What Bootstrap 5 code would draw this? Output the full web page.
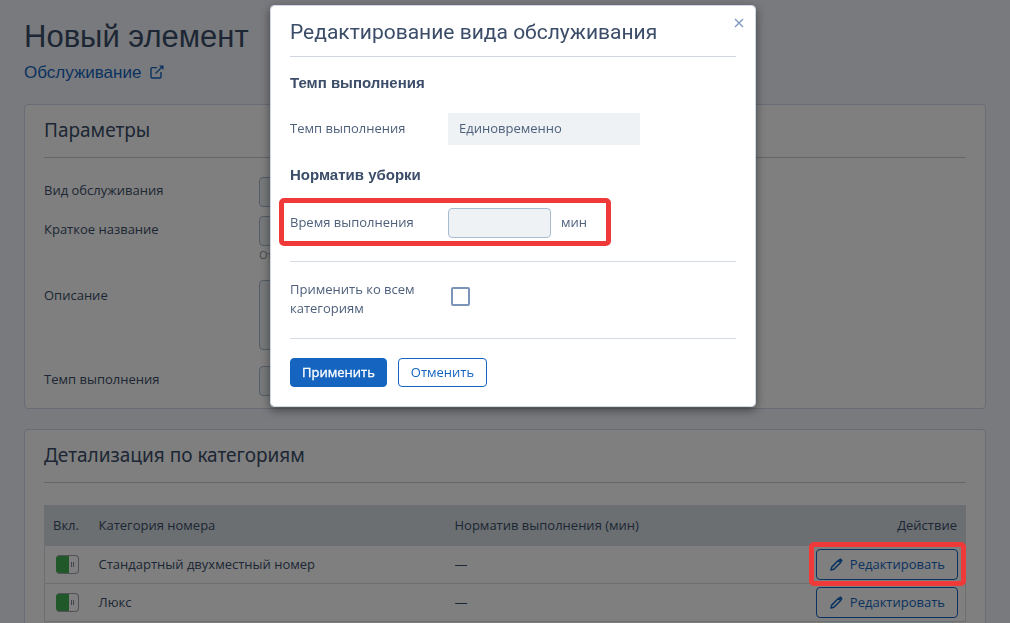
<!DOCTYPE html>
<html lang="ru">
<head>
<meta charset="utf-8">
<meta name="viewport" content="width=device-width, initial-scale=1">
<title>Новый элемент</title>
<link href="https://cdn.jsdelivr.net/npm/bootstrap@5.3.0/dist/css/bootstrap.min.css" rel="stylesheet">
<style>
  :root { --ink: #3b4d68; --brand: #1565c0; --field: #eef2f5; --mark: #f03a3a; }
  body { font-family: "Open Sans", "Noto Sans", sans-serif; font-size: 13px; line-height: 19px; color: var(--ink); background: #f2f5fa; }
  h1, h2, h3, .page-link-row { color: var(--ink); font-weight: 400; margin: 0; }
  h1, .page-link-row { font-family: "Liberation Sans", Arial, sans-serif; }
  h1 { font-size: 31px; line-height: 42px; }
  .page-link-row { font-size: 17px; line-height: 30px; }
  .page-link-row a { color: var(--brand); }
  .panel { border: 1px solid #d0d8e8; border-radius: 4px; padding: 15px 19px 12px; }
  .panel h2 { font-family: "Noto Sans", sans-serif; font-size: 19px; line-height: 20px; padding-bottom: 17px; border-bottom: 1px solid #c8ccd4; }
  .form-line { display: grid; grid-template-columns: 215px minmax(0, 480px); align-items: start; }
  .form-line > label { padding-top: 4px; }
  .form-line > .label-area { padding-top: 6px; }
  .form-control, .form-select { min-height: 30px; height: 30px; font-size: 13px; border-color: #a9bbd0; border-radius: 4px; background-color: var(--field); }
  textarea.form-control { height: 70px; }
  .hint { font-size: 11px; line-height: 18px; color: #8b95a5; }
  .grid-table { --bs-table-color: var(--ink); border: 1px solid #d9dde2; margin: 22px 0 0; }
  .grid-table > :not(caption) > * > * { padding: 0 8px; vertical-align: middle; border-color: #d9dde2; }
  .grid-table > tbody > tr > td:last-child { padding-right: 7px; }
  .grid-table th { height: 40px; font-weight: 400; background: #d6dee4; }
  .grid-table td { height: 38px; }
  .grid-table .c-on { width: 46px; }
  .grid-table .c-cat { width: 356px; }
  .toggle { appearance: none; display: block; margin: 0 0 0 3px; width: 23px; height: 19px; border: 1px solid #a9a0b0; border-left-color: #42b055; border-radius: 4px;
    background: linear-gradient(#8089a0, #8089a0) 14px 6px / 1px 5px no-repeat, linear-gradient(#8089a0, #8089a0) 16px 6px / 1px 5px no-repeat, linear-gradient(90deg, #42b055 12px, #fff 12px); }
  .btn { font-size: 13px; line-height: 19px; border-radius: 4px; padding: 4px 12px; }
  .btn-line { --bs-btn-color: var(--brand); --bs-btn-border-color: var(--brand); }
  .btn-apply { --bs-btn-color: #fff; --bs-btn-bg: var(--brand); --bs-btn-border-color: var(--brand); -webkit-text-stroke: .3px; padding: 4px 11px; }
  .modal-content .btn { height: 29px; }
  .btn-edit { height: 31px; }
  .btn-edit svg { margin-right: 6px; }
  .marked { position: relative; }
  .marked::after { content: ""; position: absolute; inset: var(--gap); border: 5px solid var(--mark); border-radius: 5px; z-index: 1060; pointer-events: none; }
  .mark-btn { --gap: -7px -8px -6px -7px; }
  .mark-row { --gap: -10px 125px -8px -11px; }
  .modal-backdrop { opacity: .5; }
  .edit-modal { --bs-modal-width: 486px; padding-left: 16px; }
  .edit-modal .modal-dialog { margin: 5px auto; }
  .edit-modal .modal-content { padding: 12px 19px 19px; border: 1px solid #d0d8e8; border-radius: 4px; box-shadow: 0 3px 10px rgba(0,0,0,.45); color: #4d5f7a; }
  .modal-title { font-family: Roboto, sans-serif; font-size: 21px; line-height: 28px; padding-bottom: 10px; border-bottom: 1px solid #d0d6e4; }
  .modal-content h3 { font-family: "Liberation Sans", Arial, sans-serif; font-size: 15px; line-height: 20px; font-weight: 700; }
  .dialog-line { display: grid; grid-template-columns: 158px 1fr; align-items: center; }
  .dialog-line > label { margin-top: -2px; }
  .plain-value { width: 192px; height: 32px; border: 0; border-radius: 0; padding: 0 11px 2px; background: var(--field); color: #4d5f7a; }
  .minutes { width: 103px; }
  .unit { padding: 0 0 2px 10px; }
  .modal-content .all-box { width: 19px; height: 19px; margin: 0 0 8px 3px; border: 2px solid #7b94b8; border-radius: 2px; }
  .rule { margin: 0; opacity: 1; border-color: #d5dbe4; }
  .close-x { position: absolute; top: 11px; right: 10px; padding: 0; border: 0; background: none; line-height: 0; color: #7f9abf; }
  .gap-s { margin-top: 9px; }
  .gap-m { margin-top: 20px; }
  .gap-f { margin-top: 19px; }
  .gap-l { margin-top: 23px; }
  .all-line { margin: 19px 0; min-height: 38px; }
</style>
</head>
<body class="overflow-hidden">
<main class="px-4 pb-4 pt-3">
  <h1>Новый элемент</h1>
  <div class="page-link-row">
    <a href="#" class="text-decoration-none">Обслуживание
      <svg class="ms-1 mb-1" width="14" height="14" viewBox="0 0 14 14" fill="none" stroke="currentColor" stroke-width="1.4" aria-hidden="true"><path d="M7 2.600H2.200a1.200 1.200 0 0 0-1.200 1.200v8A1.200 1.200 0 0 0 2.200 13h7.600a1.200 1.200 0 0 0 1.200-1.200V7M5.500 8.500L12.500 1.500"/><path d="M9 .5h4.500V5z" fill="currentColor" stroke="none"/></svg>
    </a>
  </div>

  <section class="panel bg-white mt-3">
    <h2>Параметры</h2>
    <div class="form-line gap-f"><label for="kind">Вид обслуживания</label><select class="form-select" id="kind"></select></div>
    <div class="form-line gap-s"><label for="short">Краткое название</label><div><input class="form-control" id="short"><div class="hint">От</div></div></div>
    <div class="form-line mt-3"><label class="label-area" for="desc">Описание</label><textarea class="form-control" id="desc"></textarea></div>
    <div class="form-line mt-3"><label for="pace">Темп выполнения</label><select class="form-select" id="pace"></select></div>
  </section>

  <section class="panel bg-white gap-m">
    <h2>Детализация по категориям</h2>
    <table class="table grid-table">
      <thead><tr><th class="c-on">Вкл.</th><th class="c-cat">Категория номера</th><th>Норматив выполнения (мин)</th><th class="text-end">Действие</th></tr></thead>
      <tbody>
        <tr>
          <td><input class="toggle" type="checkbox" checked aria-label="Стандартный двухместный номер"></td>
          <td>Стандартный двухместный номер</td><td>—</td>
          <td class="text-end"><span class="marked mark-btn d-inline-block"><button type="button" class="btn btn-line btn-edit d-inline-flex align-items-center"><svg width="15" height="15" viewBox="0 0 15 15" aria-hidden="true"><path fill="none" stroke="currentColor" stroke-width="1.500" stroke-linejoin="round" d="M2 13l.7-2.900L9.500 3.300l2.200 2.200L4.900 12.300z"/><path fill="currentColor" d="M9.700 2.700l1-1a1 1 0 0 1 1.400 0l1.200 1.200a1 1 0 0 1 0 1.400l-1 1z"/></svg>Редактировать</button></span></td>
        </tr>
        <tr>
          <td><input class="toggle" type="checkbox" checked aria-label="Люкс"></td>
          <td>Люкс</td><td>—</td>
          <td class="text-end"><button type="button" class="btn btn-line btn-edit d-inline-flex align-items-center"><svg width="15" height="15" viewBox="0 0 15 15" aria-hidden="true"><path fill="none" stroke="currentColor" stroke-width="1.500" stroke-linejoin="round" d="M2 13l.7-2.900L9.500 3.300l2.200 2.200L4.900 12.300z"/><path fill="currentColor" d="M9.700 2.700l1-1a1 1 0 0 1 1.400 0l1.200 1.200a1 1 0 0 1 0 1.400l-1 1z"/></svg>Редактировать</button></td>
        </tr>
      </tbody>
    </table>
  </section>
</main>

<div class="modal-backdrop"></div>
<div class="modal edit-modal d-block" role="dialog" aria-modal="true" aria-labelledby="dlg-title">
  <div class="modal-dialog">
    <form class="modal-content">
      <button type="button" class="close-x" aria-label="Закрыть"><svg width="12" height="12" viewBox="0 0 12 12" stroke="currentColor" stroke-width="1.4"><path d="M2 2l8 8M10 2l-8 8"/></svg></button>
      <h2 class="modal-title" id="dlg-title">Редактирование вида обслуживания</h2>
      <h3 class="mt-3">Темп выполнения</h3>
      <div class="dialog-line gap-m"><label for="m-pace">Темп выполнения</label><input class="plain-value" id="m-pace" value="Единовременно" readonly></div>
      <h3 class="gap-m">Норматив уборки</h3>
      <div class="dialog-line marked mark-row gap-l"><label for="m-time">Время выполнения</label><div class="d-flex align-items-center"><input class="form-control minutes" id="m-time"><span class="unit">мин</span></div></div>
      <hr class="rule gap-l">
      <div class="dialog-line all-line"><label for="m-all">Применить ко всем<br>категориям</label><input type="checkbox" class="form-check-input all-box" id="m-all"></div>
      <hr class="rule">
      <div class="d-flex gap-f" style="gap:11px"><button type="submit" class="btn btn-apply">Применить</button><button type="button" class="btn btn-line">Отменить</button></div>
    </form>
  </div>
</div>
<script src="https://cdn.jsdelivr.net/npm/bootstrap@5.3.0/dist/js/bootstrap.bundle.min.js"></script>
</body>
</html>
